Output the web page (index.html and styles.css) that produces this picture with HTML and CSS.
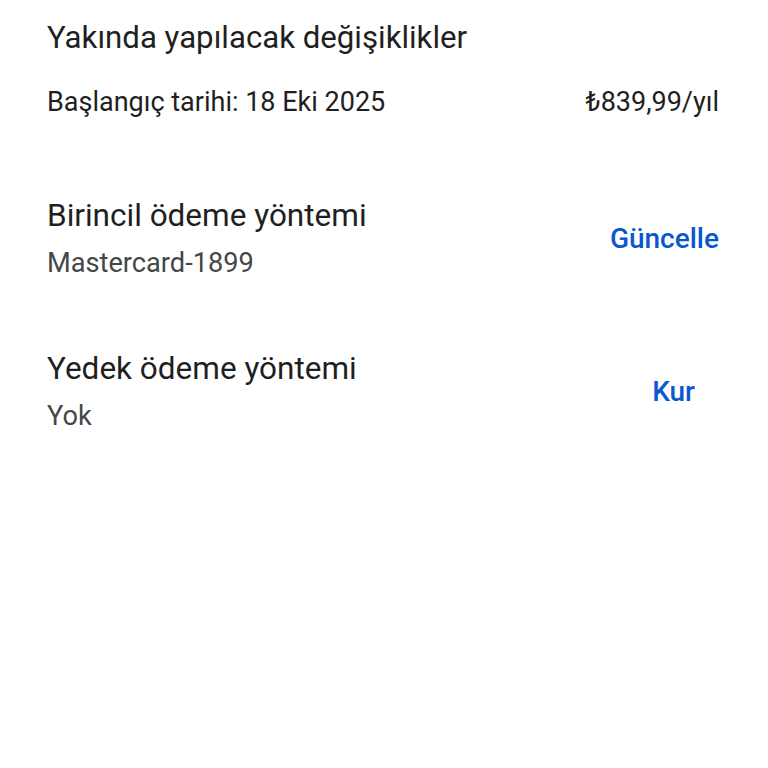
FILE: index.html
```html
<!DOCTYPE html>
<html lang="tr">
<head>
<meta charset="utf-8">
<link rel="stylesheet" href="styles.css">
</head>
<body>
<main class="page">
  <section class="upcoming">
    <h1 class="title">Yakında yapılacak değişiklikler</h1>
    <div class="row">
      <span class="body-text">Başlangıç tarihi: 18 Eki 2025</span>
      <span class="body-text">₺839,99/yıl</span>
    </div>
  </section>
  <section class="method">
    <div class="method-info">
      <div class="method-title">Birincil ödeme yöntemi</div>
      <div class="method-sub">Mastercard-1899</div>
    </div>
    <button class="action">Güncelle</button>
  </section>
  <section class="method">
    <div class="method-info">
      <div class="method-title">Yedek ödeme yöntemi</div>
      <div class="method-sub">Yok</div>
    </div>
    <button class="action action-short">Kur</button>
  </section>
</main>
</body>
</html>
```
FILE: styles.css
```css
html, body {
  margin: 0;
  background: #ffffff;
}
.page {
  font-family: Roboto, "Noto Sans", sans-serif;
  color: #1f1f1f;
  padding: 18px 49px 0 47px;
}
.title {
  margin: 0;
  font-size: 31.2px;
  font-weight: 400;
  line-height: 40px;
}
.row {
  display: flex;
  justify-content: space-between;
  margin-top: 26px;
}
.body-text {
  font-size: 27px;
  line-height: 36px;
}
.method {
  display: flex;
  align-items: center;
  justify-content: space-between;
  margin-top: 76px;
}
.method + .method {
  margin-top: 68px;
}
.method-title {
  font-size: 31.5px;
  line-height: 40px;
}
.method-sub {
  font-size: 27.2px;
  line-height: 36px;
  color: #444746;
  margin-top: 9px;
}
.action {
  border: none;
  background: none;
  padding: 0;
  font-family: inherit;
  font-size: 28px;
  font-weight: 500;
  color: #0b57d0;
}
.action-short {
  margin-right: 24px;
}
```
